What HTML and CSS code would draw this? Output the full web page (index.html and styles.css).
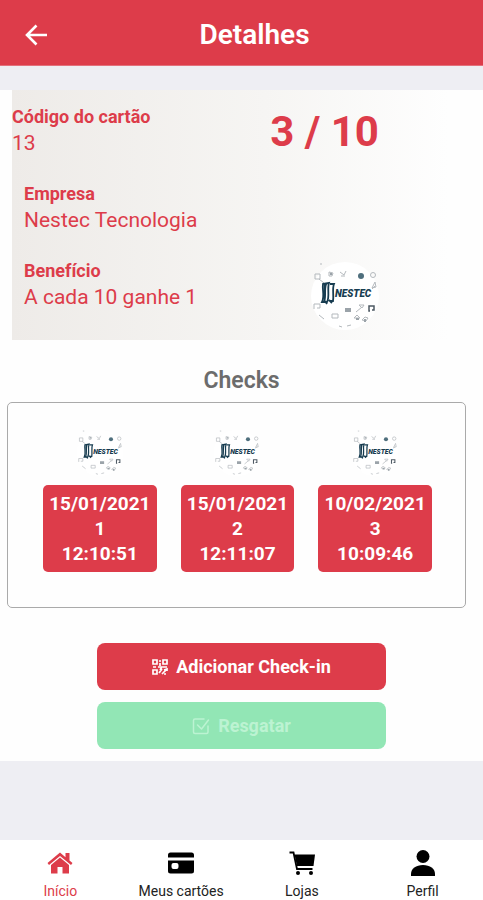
FILE: index.html
```html
<!DOCTYPE html>
<html lang="pt-BR">
<head>
<meta charset="utf-8">
<meta name="viewport" content="width=device-width, initial-scale=1">
<title>Detalhes</title>
<link rel="stylesheet" href="styles.css">
</head>
<body>
<svg class="defs" aria-hidden="true">
  <symbol id="nestec" viewBox="0 0 70 70">
    <circle cx="35" cy="35" r="34" fill="#fff"/>
    <g fill="none" stroke="#b4b9bd" stroke-width="1">
      <path d="M5 13h5v5H5zM9 18l5 4M10 3h2M19 11l4 1-1 3h-3zM30 11l4 3 2-4M31 15h4M65 21l-3 6 4-1zM62 28l3-3"/>
      <circle cx="63" cy="14" r="2.5"/>
      <path d="M4 48v-5h6v4H7M9 54l5 4M22 53h6v4h-6zM49 44h5l-2 3zM52 46l-6 5M44 57l3-3 3 3zM52 59l3-3 3 1-2 3zM37 65l4-1M29 65l3 1"/>
    </g>
    <g fill="#9ba3a9"><path d="M35 47h6v4h-6zM20 12h2v2h-2zM46 57h3v2h-3zM54 58h2v3h-2z"/></g>
    <circle cx="51" cy="15" r="3" fill="#4f6f7d"/>
    <path d="M60 50h-1v-5h5v4h-2" fill="none" stroke="#4d5963" stroke-width="1.5"/>
    <path d="M13 23l6-1c-2 6 1 14-2 19h-5c3-6 0-12 1-18zM20 23h4c-2 5 0 11-1 17h-3M15 40l2 3M19 39l3 3" fill="none" stroke="#173c50" stroke-width="1.800"/>
    <path d="M14 23h3c-2 6 0 12-2 18h-2c2-6 0-12 1-18z" fill="#173c50"/>
    <text class="logo-text" x="25" y="36">NESTEC</text>
  </symbol>
</svg>

<header class="topbar">
  <button class="back" type="button" aria-label="Voltar">
    <svg viewBox="0 0 24 24" fill="none" stroke="currentColor" stroke-width="2.600"><path d="M23 12H3M12.500 2.500 3 12l9.500 9.500"/></svg>
  </button>
  <h1 class="title">Detalhes</h1>
</header>

<main class="content">
  <section class="card">
    <div class="card-info">
      <dl class="field field-code"><dt>Código do cartão</dt><dd>13</dd></dl>
      <dl class="field"><dt>Empresa</dt><dd>Nestec Tecnologia</dd></dl>
      <dl class="field"><dt>Benefício</dt><dd>A cada 10 ganhe 1</dd></dl>
    </div>
    <div class="card-side">
      <p class="score">3 / 10</p>
      <svg class="brand" role="img" aria-label="Nestec"><use href="#nestec"/></svg>
    </div>
  </section>

  <h2 class="subtitle">Checks</h2>
  <ul class="checks">
    <li class="check">
      <svg class="check-logo" aria-hidden="true"><use href="#nestec"/></svg>
      <div class="stamp"><span>15/01/2021</span><span>1</span><span>12:10:51</span></div>
    </li>
    <li class="check">
      <svg class="check-logo" aria-hidden="true"><use href="#nestec"/></svg>
      <div class="stamp"><span>15/01/2021</span><span>2</span><span>12:11:07</span></div>
    </li>
    <li class="check">
      <svg class="check-logo" aria-hidden="true"><use href="#nestec"/></svg>
      <div class="stamp"><span>10/02/2021</span><span>3</span><span>10:09:46</span></div>
    </li>
  </ul>

  <div class="actions">
    <button class="btn btn-add" type="button">
      <svg class="icon-qr" viewBox="0 0 16 16" fill="none" stroke="currentColor" stroke-width="1.700"><path d="M1 1h4v4H1zM11 1h4v4h-4zM1 11h4v4H1zM7 2h2M8 4v3M1 8h3M6 8h4l-2 3M11 8h4M7 14l3-4M10 15l5-5M12 11l3-1v2M12 15h2"/></svg>
      Adicionar Check-in
    </button>
    <button class="btn btn-redeem" type="button" disabled>
      <svg class="icon-check" viewBox="0 0 18 18" fill="none" stroke="currentColor" stroke-width="1.500" stroke-linecap="round" stroke-linejoin="round"><path d="M12 2H3a1.500 1.500 0 0 0-1.500 1.500V15A1.500 1.500 0 0 0 3 16.500h11.500A1.500 1.500 0 0 0 16 15V9M5.500 8l4 4L16.500 3"/></svg>
      Resgatar
    </button>
  </div>
</main>

<nav class="tabs">
  <a class="tab tab-active" href="#inicio">
    <svg viewBox="0 0 26 26" fill="currentColor"><path d="M13 2.500.5 13l1.500 2L13 6l11 9 1.500-2-3-2.500V3h-4v4.200zM13 7.500 4 15v8.500h6.500V17h5v6.500H22V15z"/></svg>
    Início
  </a>
  <a class="tab" href="#cartoes">
    <svg viewBox="0 0 26 26" fill="currentColor"><path fill-rule="evenodd" d="M2.500 2.500h21A2.500 2.500 0 0 1 26 5v2.500H0V5a2.500 2.500 0 0 1 2.500-2.500zM0 10.500h26V21a2.500 2.500 0 0 1-2.500 2.500h-21A2.500 2.500 0 0 1 0 21zm5.500 2.500a2 2 0 0 0-2 2v2a2 2 0 0 0 2 2h3a2 2 0 0 0 2-2v-2a2 2 0 0 0-2-2z"/></svg>
    Meus cartões
  </a>
  <a class="tab" href="#lojas">
    <svg viewBox="0 0 26 26"><path d="M5.500 4.500H26l-1.500 11.500H8z" fill="currentColor"/><path d="M.5 2.500h4L8 19h15.500" fill="none" stroke="currentColor" stroke-width="1.800"/><circle cx="9" cy="23" r="2" fill="currentColor"/><circle cx="22" cy="23" r="2" fill="currentColor"/></svg>
    Lojas
  </a>
  <a class="tab" href="#perfil">
    <svg viewBox="0 0 26 26" fill="currentColor"><circle cx="13" cy="6.500" r="6.500"/><path d="M1 26v-2c0-5.500 5-9 12-9s12 3.500 12 9v2z"/></svg>
    Perfil
  </a>
</nav>
</body>
</html>
```
FILE: styles.css
```css
* {
  box-sizing: border-box;
  margin: 0;
  padding: 0;
}

body {
  display: flex;
  flex-direction: column;
  min-height: 100vh;
  background: #eeeef3;
  font-family: Roboto, "Liberation Sans", sans-serif;
  color: #dd3c4a;
}

.defs {
  display: none;
}

.logo-text {
  font: italic 900 10px Roboto, sans-serif;
  fill: #173c50;
}

.topbar {
  display: grid;
  grid-template-columns: 48px 1fr 48px;
  align-items: center;
  padding: 13px 12px 8px;
  background: #dd3c4a;
  border-bottom: 1px solid #e3707b;
  color: #fff;
}

.back {
  display: flex;
  align-items: center;
  justify-content: center;
  height: 44px;
  border: 0;
  background: none;
  color: inherit;
}

.back svg {
  width: 24px;
  height: 24px;
}

.title {
  margin-left: 26px;
  font-size: 28px;
  font-weight: 600;
  line-height: 36px;
  text-align: center;
}

.content {
  margin-top: 24px;
  padding-bottom: 12px;
  background: #fefefe;
}

.card {
  display: grid;
  grid-template-columns: 7fr 8fr;
  margin: 0 12px;
  min-height: 250px;
  background: linear-gradient(to right, #eeebe8, #f6f5f3 55%, #fefefe 95%);
}

.card-info {
  display: flex;
  flex-direction: column;
  gap: 24px;
  padding-top: 15px;
  white-space: nowrap;
}

.field {
  padding-left: 12px;
}

.field-code {
  padding-left: 0;
}

.field dt {
  font-size: 18px;
  font-weight: 700;
  line-height: 24px;
}

.field dd {
  font-size: 21px;
  line-height: 29px;
}

.card-side {
  display: flex;
  flex-direction: column;
  justify-content: space-between;
  padding: 16px 0 8px 44px;
}

.score {
  font-size: 42px;
  font-weight: 700;
  line-height: 52px;
}

.brand {
  width: 70px;
  height: 72px;
  margin-left: 40px;
}

.subtitle {
  margin: 26px 0 6px;
  color: #6c6c6c;
  font-size: 23px;
  font-weight: 600;
  line-height: 30px;
  text-align: center;
}

.checks {
  display: grid;
  grid-template-columns: repeat(3, 1fr);
  gap: 24px;
  margin: 0 17px 0 7px;
  padding: 26px 33px 35px 35px;
  border: 1px solid #aaa;
  border-radius: 5px;
  list-style: none;
}

.check {
  display: flex;
  flex-direction: column;
  align-items: center;
  gap: 8px;
}

.check-logo {
  width: 48px;
  height: 48px;
}

.stamp {
  display: flex;
  flex-direction: column;
  align-self: stretch;
  padding: 6px 0;
  border-radius: 5px;
  background: #dd3c4a;
  color: #fff;
  font-size: 19px;
  font-weight: 700;
  line-height: 25px;
  text-align: center;
}

.actions {
  display: flex;
  flex-direction: column;
  gap: 12px;
  width: 60%;
  margin: 35px auto 0;
}

.btn {
  display: flex;
  align-items: center;
  justify-content: center;
  gap: 8px;
  height: 47px;
  border: 0;
  border-radius: 8px;
  color: #fff;
  font: 700 18px Roboto, sans-serif;
}

.btn-add {
  background: #dd3c4a;
}

.btn-redeem {
  background: #92e6b5;
  color: #bcf3d2;
}

.icon-qr {
  width: 16px;
  height: 16px;
}

.icon-check {
  width: 18px;
  height: 18px;
}

.tabs {
  display: grid;
  grid-template-columns: repeat(4, 1fr);
  height: 60px;
  margin-top: auto;
  background: #fff;
}

.tab {
  display: flex;
  flex-direction: column;
  align-items: center;
  gap: 6px;
  padding-top: 10px;
  color: #222;
  font-size: 14px;
  line-height: 18px;
  text-decoration: none;
}

.tab svg {
  width: 26px;
  height: 26px;
  color: #000;
}

.tab-active,
.tab-active svg {
  color: #dd3c4a;
}
```
